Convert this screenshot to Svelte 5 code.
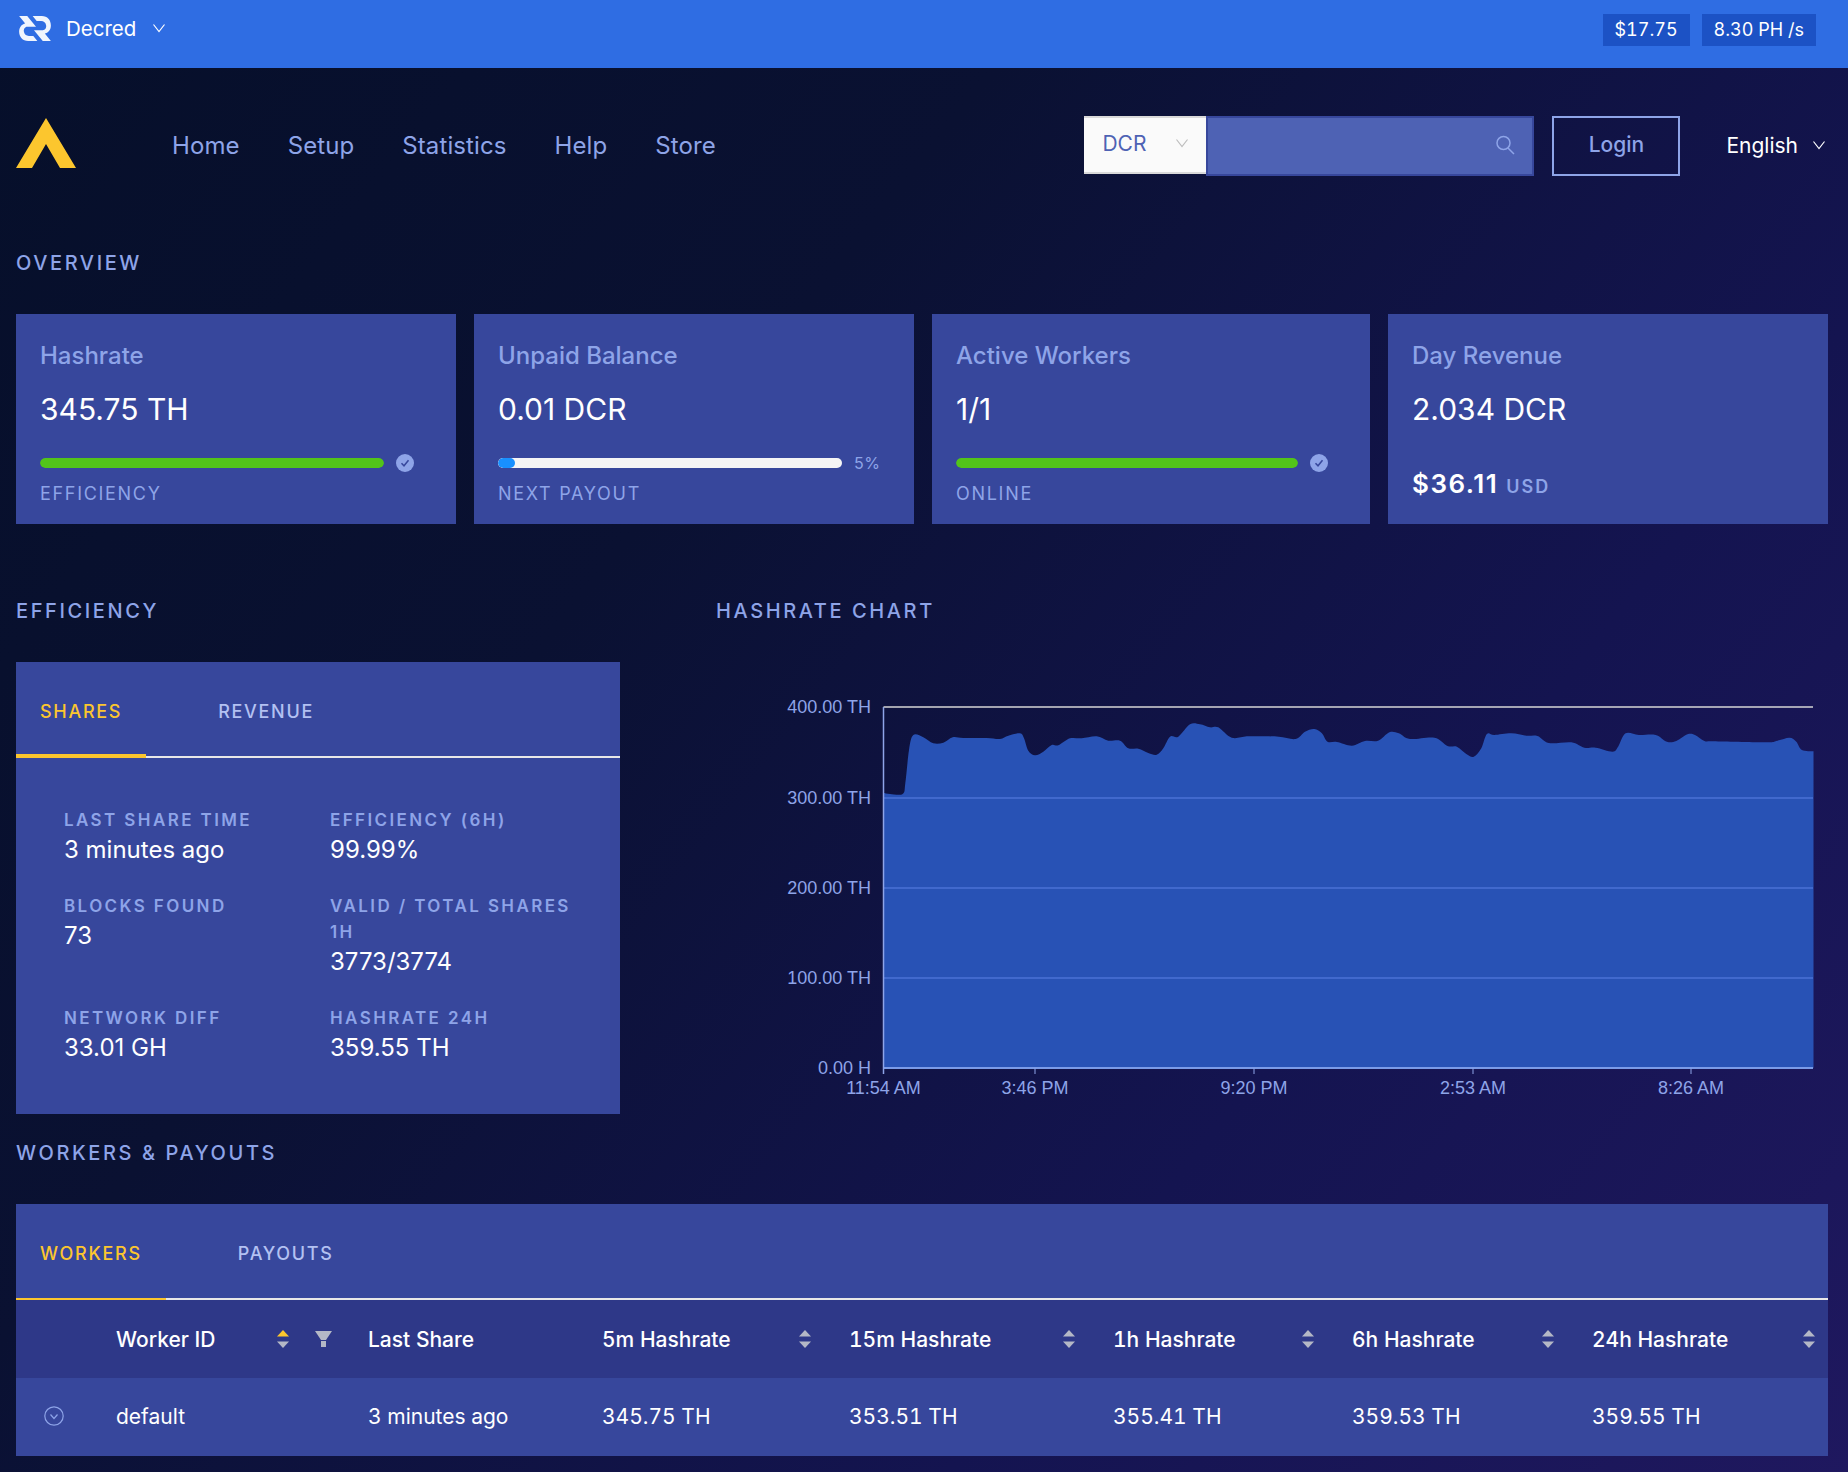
<script>
  const z4 = [[370,338],[390,342],[428,342],[436,310],[447,210],[460,165],[490,172],[520,190],[550,188],[578,172],[610,174],[680,174],[720,177],[745,167],[780,160],[792,175],[805,212],[825,226],[850,215],[875,195],[895,196],[930,175],[965,175],[1010,169],[1045,182],[1080,182],[1105,205],[1135,206],[1165,219],[1190,224],[1210,205],[1230,170],[1255,170],[1290,133],[1320,133],[1350,142],[1375,142],[1415,173],[1460,169]];
  const z5 = [[0,169],[50,170],[95,177],[120,155],[145,147],[165,160],[180,185],[205,186],[245,197],[280,183],[315,182],[345,157],[370,160],[400,177],[465,173],[500,198],[525,200],[550,222],[570,230],[590,205],[605,162],[625,165],[670,160],[710,167],[740,168],[770,189],[830,187],[865,203],[895,203],[940,215],[955,200],[975,160],[1010,165],[1055,165],[1085,185],[1110,183],[1140,163],[1160,165],[1185,183],[1210,184],[1350,187],[1380,182],[1412,173],[1430,185],[1445,210],[1476,214]];
  const OX = 760, OY = 680;
  const pts = [
    ...z4.map(([x, y]) => [760 + x / 3 - OX, 680 + y / 3 - OY]),
    ...z5.map(([x, y]) => [1260 + x * 0.375 - OX, 680 + y / 3 - OY])
  ];
  function smooth(p) {
    let d = `M${p[0][0].toFixed(1)} ${p[0][1].toFixed(1)}`;
    for (let i = 0; i < p.length - 1; i++) {
      const a = p[Math.max(i - 1, 0)], b = p[i], c = p[i + 1], e = p[Math.min(i + 2, p.length - 1)];
      const c1 = [b[0] + (c[0] - a[0]) / 6, b[1] + (c[1] - a[1]) / 6];
      const c2 = [c[0] - (e[0] - b[0]) / 6, c[1] - (e[1] - b[1]) / 6];
      d += `C${c1[0].toFixed(1)} ${c1[1].toFixed(1)} ${c2[0].toFixed(1)} ${c2[1].toFixed(1)} ${c[0].toFixed(1)} ${c[1].toFixed(1)}`;
    }
    return d;
  }
  const area = smooth(pts) + `L${pts[pts.length - 1][0].toFixed(1)} 388L${pts[0][0].toFixed(1)} 388Z`;
  const L = 123.5, R = 1053, B = 388;
  const yTicks = [[27, '400.00 TH'], [118, '300.00 TH'], [208, '200.00 TH'], [298, '100.00 TH'], [388, '0.00 H']];
  const xTicks = [[123.5, '11:54 AM'], [275, '3:46 PM'], [494, '9:20 PM'], [713, '2:53 AM'], [931, '8:26 AM']];
  const nav = ['Home', 'Setup', 'Statistics', 'Help', 'Store'];
  const stats = [
    { title: 'Hashrate', value: '345.75 TH', color: '#52c41a', pct: 100, end: 'check', label: 'EFFICIENCY' },
    { title: 'Unpaid Balance', value: '0.01 DCR', color: '#1890ff', pct: 5, end: '5%', label: 'NEXT PAYOUT' },
    { title: 'Active Workers', value: '1/1', color: '#52c41a', pct: 100, end: 'check', label: 'ONLINE' }
  ];
  const details = [
    ['LAST SHARE TIME', '3 minutes ago'], ['EFFICIENCY (6H)', '99.99%'],
    ['BLOCKS FOUND', '73'], ['VALID / TOTAL SHARES 1H', '3773/3774'],
    ['NETWORK DIFF', '33.01 GH'], ['HASHRATE 24H', '359.55 TH']
  ];
  const heads = ['5m Hashrate', '15m Hashrate', '1h Hashrate', '6h Hashrate', '24h Hashrate'];
  const cells = ['3 minutes ago', '345.75 TH', '353.51 TH', '355.41 TH', '359.53 TH', '359.55 TH'];
</script>

{#snippet chevron(cls)}
  <svg class={cls} viewBox="0 0 14 10" fill="none" stroke="currentColor" stroke-width="1.2"><path d="M1.5 1.5 7 8.5 12.5 1.5" /></svg>
{/snippet}
{#snippet sorter(active)}
  <svg class="sort" viewBox="0 0 12 18"><path d="M6 0 12 6.500H0Z" fill={active ? '#fcc62e' : '#b4b8c6'} /><path d="M6 18 0 11.500H12Z" fill="#b4b8c6" /></svg>
{/snippet}

<div class="page">
  <header class="top">
    <div class="coin">
      <svg class="decred" viewBox="28 26 94 74" fill="#fff" fill-opacity=".93">
        <path d="M122 100H98L72 68H98C105 68 109 60 108 54C107 46 101 41 93 41H80L68 26H95C112 26 122 38 122 54C122 68 113 76 104 78Z" />
        <path d="M28 26H52L78 58H52C45 58 41 66 42 72C43 80 49 85 57 85H70L82 100H55C38 100 28 88 28 72C28 58 37 50 46 48Z" />
      </svg>
      <span class="coin-name">Decred</span>
      {@render chevron('chev')}
    </div>
    <div class="badges">
      <span class="badge">$17.75</span>
      <span class="badge">8.30 PH /s</span>
    </div>
  </header>

  <nav class="nav">
    <svg class="logo" viewBox="0 0 60 50" fill="#fcc62e"><path d="M30 0 60 50H44L30 26 16 50H0Z" /></svg>
    <ul class="links">
      {#each nav as n}<li>{n}</li>{/each}
    </ul>
    <div class="search">
      <div class="pick"><span>DCR</span>{@render chevron('chev grey')}</div>
      <div class="field">
        <svg viewBox="0 0 20 20" fill="none" stroke="#8ea4e8" stroke-width="1.5"><circle cx="8.500" cy="8" r="6.500" /><path d="M13 13 19 19" /></svg>
      </div>
    </div>
    <button class="login">Login</button>
    <div class="lang"><span>English</span>{@render chevron('chev')}</div>
  </nav>

  <main class="content">
    <h2 class="overview">OVERVIEW</h2>
    <section class="stats">
      {#each stats as s}
        <article class="stat">
          <h3>{s.title}</h3>
          <p class="value">{s.value}</p>
          <div class="progress">
            <div class="track"><div class="fill" class:full={s.pct === 100} style="width:{s.pct}%;background:{s.color}"></div></div>
            {#if s.end === 'check'}
              <svg class="ok" viewBox="0 0 18 18"><circle cx="9" cy="9" r="9" fill="#8ea4e8" /><path d="M5.500 9.200 8 11.800 12.500 6.200" fill="none" stroke="#37479c" stroke-width="1.500" /></svg>
            {:else}
              <span class="pct">{s.end}</span>
            {/if}
          </div>
          <p class="cap">{s.label}</p>
        </article>
      {/each}
      <article class="stat">
        <h3>Day Revenue</h3>
        <p class="value">2.034 DCR</p>
        <p class="usd">$36.11 <small>USD</small></p>
      </article>
    </section>

    <section class="mid">
      <div class="eff">
        <h2>EFFICIENCY</h2>
        <div class="panel">
          <div class="tabs small">
            <span class="tab on">SHARES</span>
            <span class="tab">REVENUE</span>
          </div>
          <dl class="grid">
            {#each details as [k, v]}
              <div><dt>{k}</dt><dd>{v}</dd></div>
            {/each}
          </dl>
        </div>
      </div>
      <div class="chart">
        <h2>HASHRATE CHART</h2>
        <svg class="plot" viewBox="0 0 1088 430" width="1088" height="430">
          <path d={area} fill="#2852b5" />
          <line x1={L} x2={R} y1="27" y2="27" stroke="#d6d6d6" stroke-width="1.500" />
          {#each yTicks.slice(1, 4) as [y]}
            <line x1={L} x2={R} y1={y} y2={y} stroke="#4a72d6" stroke-width="1.500" />
          {/each}
          <line x1={L} x2={R} y1={B} y2={B} stroke="#7b9be8" stroke-width="2" />
          <line x1={L} x2={L} y1="27" y2={B + 6} stroke="#8ea4e8" stroke-width="1.500" />
          {#each yTicks as [y, t]}
            <text x="111" y={y + 6} text-anchor="end">{t}</text>
          {/each}
          {#each xTicks as [x, t]}
            <line x1={x} x2={x} y1={B} y2={B + 6} stroke="#8ea4e8" stroke-width="1" />
            <text {x} y="414" text-anchor="middle">{t}</text>
          {/each}
        </svg>
      </div>
    </section>

    <h2 class="workers">WORKERS &amp; PAYOUTS</h2>
    <section class="panel wp">
      <div class="tabs">
        <span class="tab on">WORKERS</span>
        <span class="tab">PAYOUTS</span>
      </div>
      <div class="row head">
        <div></div>
        <div class="th">Worker ID <span class="th-icons">{@render sorter(true)}<svg class="funnel" viewBox="0 0 17 16" fill="#b4b8c6"><path d="M0 0H17L11 9H6Z" /><rect x="6" y="10" width="5" height="6" /></svg></span></div>
        <div class="th">Last Share</div>
        {#each heads as h}
          <div class="th">{h}{@render sorter(false)}</div>
        {/each}
      </div>
      <div class="row body">
        <div class="exp"><svg viewBox="0 0 20 20" fill="none" stroke="#8ea4e8" stroke-width="1.200"><circle cx="10" cy="10" r="9.200" /><path d="M6.500 8.500 10 12.500 13.500 8.500" /></svg></div>
        <div>default</div>
        {#each cells as c}<div>{c}</div>{/each}
      </div>
    </section>
  </main>
</div>

<style>
  :global(body) { margin: 0; background: #0a1030; }
  .page {
    width: 1848px; height: 1472px; overflow: hidden;
    background: linear-gradient(128deg, #060f2a 0%, #0a1132 35%, #141450 70%, #1f185f 100%);
    font-family: Inter, "Liberation Sans", sans-serif; color: #fff;
  }
  h2, h3, p, ul, dl, dd { margin: 0; padding: 0; }
  .top { height: 68px; background: #2f6de3; display: flex; align-items: center; justify-content: space-between; padding: 0 32px 12px 19px; box-sizing: border-box; }
  .coin { display: flex; align-items: center; }
  .decred { width: 32px; height: 25px; }
  .coin-name { font-size: 20.500px; margin-left: 15px; margin-right: 16px; color: #fff; }
  .chev { width: 14px; height: 10px; color: #fff; }
  .chev.grey { color: #bdbdbd; }
  .badges { display: flex; gap: 12px; margin-top: 4px; }
  .badge { background: #1c52c5; height: 32px; line-height: 32px; padding: 0 12px; font-size: 18px; font-variant-numeric: tabular-nums; }

  .nav { height: 128px; box-sizing: border-box; padding: 28px 22px 0 16px; display: flex; align-items: center; }
  .logo { width: 60px; height: 50px; margin-top: -6px; }
  .links { display: flex; list-style: none; gap: 48px; margin-left: 96px; margin-top: -2px; font-size: 24px; letter-spacing: .1px; color: #8ea4e8; flex: 1; }
  .search { display: flex; height: 60px; }
  .pick { width: 122px; height: 58px; box-sizing: border-box; background: #fafafa; border-top: 2px solid #d9d9d9; border-bottom: 2px solid #d9d9d9; display: flex; align-items: center; justify-content: space-between; padding: 0 17px 4px 18px; color: #4e62b4; font-size: 21px; }
  .field { width: 328px; box-sizing: border-box; background: #4e62b4; border: 2px solid #37479c; display: flex; align-items: center; justify-content: flex-end; padding-right: 17px; }
  .field svg { width: 20px; height: 20px; margin-bottom: 2px; }
  .login { width: 128px; height: 60px; margin-left: 18px; padding: 0 0 3px; background: transparent; border: 2px solid #8ea4e8; color: #8ea4e8; font: 500 21px Inter, sans-serif; }
  .lang { display: flex; align-items: center; margin-left: 46px; margin-top: -2px; font-size: 21px; gap: 14px; }

  .content { padding: 0 20px 0 16px; }
  h2 { font-size: 20px; font-weight: 500; letter-spacing: 2.6px; color: #8ea4e8; line-height: 24px; }
  .overview { margin-top: 55px; }
  .stats { display: grid; grid-template-columns: 440px 440px 438px 440px; column-gap: 18px; margin-top: 39px; }
  .stat { height: 210px; background: #37479c; box-sizing: border-box; padding: 28px 24px 0; }
  .stat h3 { font-size: 24px; line-height: 28px; font-weight: 500; color: #8ea4e8; }
  .value { font-size: 30px; line-height: 36px; margin-top: 21px; color: #fff; }
  .progress { display: flex; align-items: center; height: 18px; margin-top: 27px; padding-right: 18px; }
  .track { flex: 1; height: 10px; border-radius: 5px; background: #f5f5f5; overflow: hidden; }
  .fill { height: 100%; border-radius: 5px; }
  .ok { width: 18px; height: 18px; margin-left: 12px; flex: none; }
  .pct { margin-left: 12px; width: 18px; flex: none; white-space: nowrap; font-size: 16px; color: #8ea4e8; letter-spacing: .5px; }
  .cap { font-size: 18px; line-height: 22px; letter-spacing: 1.7px; color: #8ea4e8; margin-top: 11px; }
  .usd { font-size: 26px; line-height: 30px; font-weight: 600; letter-spacing: 1.5px; margin-top: 42px; }
  .usd small { font-size: 18px; color: #8ea4e8; letter-spacing: 2px; }

  .mid { display: flex; margin-top: 75px; }
  .eff { width: 604px; flex: none; }
  .eff .panel { margin-top: 39px; height: 452px; }
  .panel { background: #37479c; }
  .chart { margin-left: 96px; flex: none; }
  .plot { display: block; margin: 57px 0 0 44px; }
  .plot text { font: 18px "Liberation Sans", Arial, sans-serif; fill: #8ea4e8; }

  .tabs { display: flex; border-bottom: 2px solid #e8e8e8; box-sizing: border-box; height: 96px; }
  .tab { padding: 0 24px; line-height: 100px; font-size: 18px; font-weight: 500; letter-spacing: 1.7px; color: #b3c1f2; margin-right: 48px; position: relative; height: 94px; }
  .tab.on { color: #fcc62e; }
  .tab.on::after { content: ""; position: absolute; left: 0; right: 0; bottom: -2px; height: 2px; background: #fcc62e; }
  .small .tab.on::after { height: 4px; }
  .grid { display: grid; grid-template-columns: 266px 1fr; padding: 49px 40px 0 48px; row-gap: 26px; }
  dt { font-size: 17px; line-height: 26px; font-weight: 600; letter-spacing: 2.4px; color: #8ea4e8; }
  dd { font-size: 24px; line-height: 34px; color: #fff; }

  .workers { margin-top: 27px; }
  .wp { margin-top: 39px; height: 252px; }
  .row { display: grid; grid-template-columns: 84px 252px 234px 247px 264px 239px 240px 252px; align-items: center; font-size: 21px; font-variant-numeric: tabular-nums; }
  .row > div { padding-left: 16px; box-sizing: border-box; }
  .head { height: 78px; background: #2e3888; font-weight: 500; }
  .body { height: 78px; padding-bottom: 2px; box-sizing: border-box; background: #37479c; color: #fff; }
  .th { display: flex; align-items: center; justify-content: space-between; padding-right: 22px; }
  .th:last-child { padding-right: 13px; }
  .th-icons { display: flex; align-items: center; gap: 26px; margin-right: -2px; }
  .sort { width: 12px; height: 18px; }
  .funnel { width: 17px; height: 16px; }
  .exp { display: flex; }
  .exp svg { width: 20px; height: 20px; margin-left: 28px; }
  .row > .exp { padding-left: 0; }
  .track:has(.full) { background: transparent; }
</style>
